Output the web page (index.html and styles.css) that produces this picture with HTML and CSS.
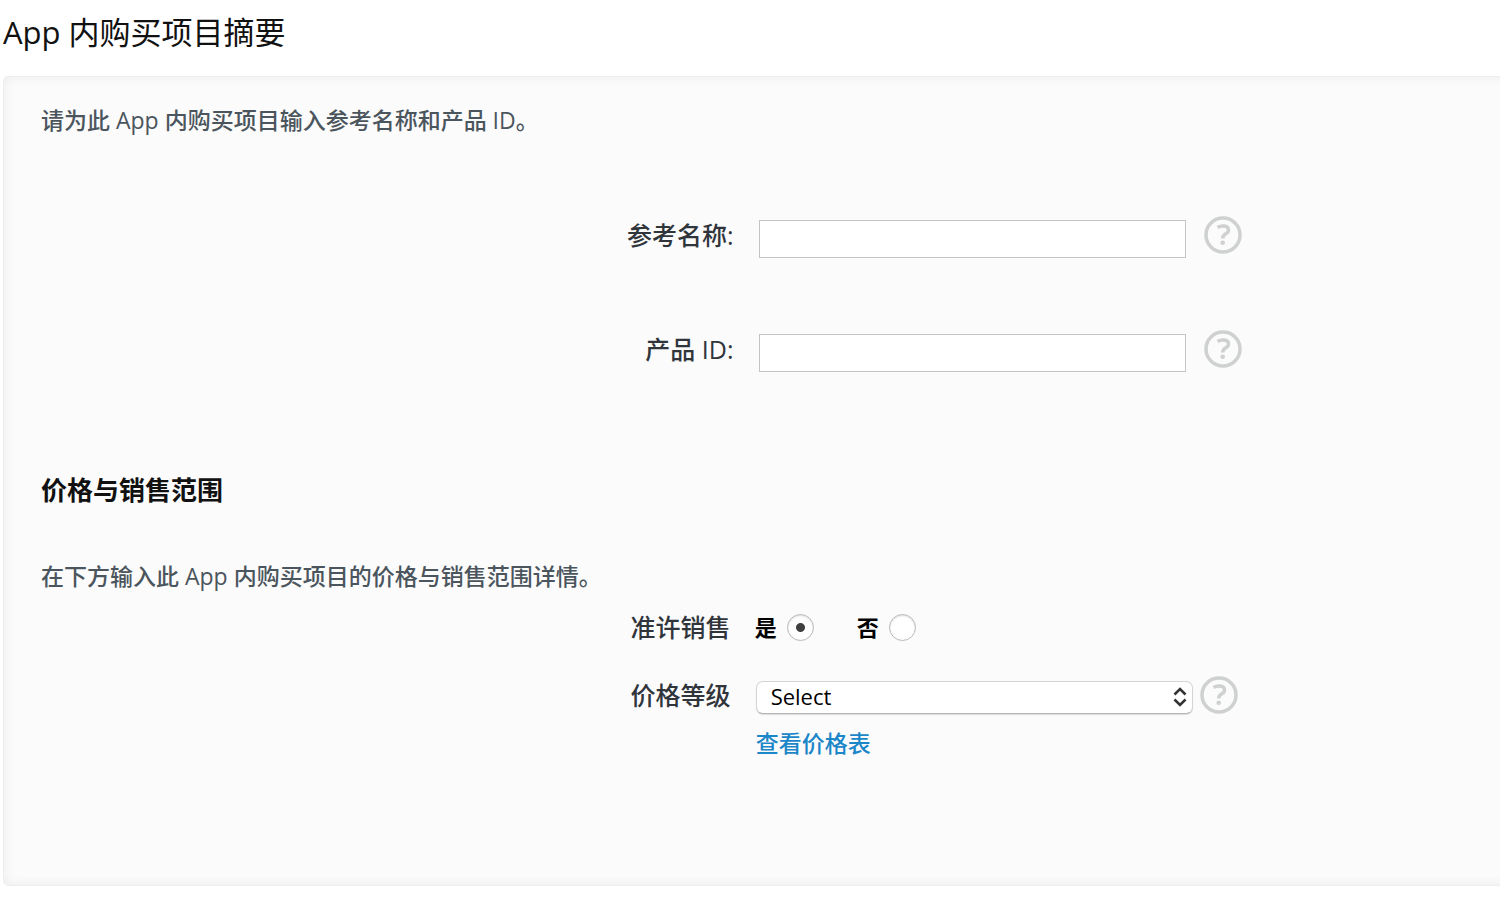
FILE: index.html
```html
<!DOCTYPE html>
<html lang="zh-CN">

<head>
    <meta charset="UTF-8">
    <meta name="viewport" content="width=device-width, initial-scale=1.0">
    <title>App 内购买项目摘要</title>
    <link rel="stylesheet" href="styles.css">
</head>

<body>
    <h1>App 内购买项目摘要</h1>

    <form class="panel">
        <p class="intro">请为此 App 内购买项目输入参考名称和产品 ID。</p>

        <div class="row text-row">
            <label class="name" for="refName">参考名称:</label>
            <input type="text" id="refName" name="refName">
            <button type="button" class="help" aria-label="参考名称">
                <svg viewBox="0 0 38 38"><circle cx="19" cy="19" r="17"/><path d="M13.5 11.5Q16 10 19 10Q24.500 10 24.500 14Q24.500 16.200 21.800 17.800Q18.700 19.600 18.700 22.500"/><circle class="dot" cx="18.700" cy="26.800" r="2.300"/></svg>
            </button>
        </div>

        <div class="row text-row">
            <label class="name" for="productId">产品 ID:</label>
            <input type="text" id="productId" name="productId">
            <button type="button" class="help" aria-label="产品 ID">
                <svg viewBox="0 0 38 38"><circle cx="19" cy="19" r="17"/><path d="M13.5 11.5Q16 10 19 10Q24.500 10 24.500 14Q24.500 16.200 21.800 17.800Q18.700 19.600 18.700 22.500"/><circle class="dot" cx="18.700" cy="26.800" r="2.300"/></svg>
            </button>
        </div>

        <h2>价格与销售范围</h2>
        <p class="intro">在下方输入此 App 内购买项目的价格与销售范围详情。</p>

        <div class="row price-row" role="radiogroup" aria-labelledby="saleLabel">
            <span class="name" id="saleLabel">准许销售</span>
            <div class="options">
                <label for="saleYes">是 <input type="radio" id="saleYes" name="sale" checked></label>
                <label for="saleNo">否 <input type="radio" id="saleNo" name="sale"></label>
            </div>
        </div>

        <div class="row price-row">
            <label class="name" for="priceTier">价格等级</label>
            <div class="tier">
                <div class="select">
                    <select id="priceTier" name="priceTier">
                        <option>Select</option>
                    </select>
                    <svg viewBox="0 0 14 20"><path d="M1.500 7.500L7 2L12.500 7.500M1.500 12.500L7 18L12.500 12.500"/></svg>
                </div>
                <a href="#">查看价格表</a>
            </div>
            <button type="button" class="help" aria-label="价格等级">
                <svg viewBox="0 0 38 38"><circle cx="19" cy="19" r="17"/><path d="M13.5 11.5Q16 10 19 10Q24.500 10 24.500 14Q24.500 16.200 21.800 17.800Q18.700 19.600 18.700 22.500"/><circle class="dot" cx="18.700" cy="26.800" r="2.300"/></svg>
            </button>
        </div>
    </form>
</body>

</html>
```
FILE: styles.css
```css
* {
    box-sizing: border-box;
}

body {
    margin: 0;
    background-color: #fff;
    color: #111;
    font-family: "Open Sans", "Noto Sans CJK SC", sans-serif;
    font-size: 23px;
    font-weight: 500;
    overflow-x: hidden;
}

h1 {
    margin: 0;
    padding: 12px 3px 24px;
    font-size: 31px;
    font-weight: 400;
    line-height: 40px;
}

h2 {
    margin: 98px 0 50px;
    font-size: 26px;
    font-weight: 700;
    line-height: 40px;
}

/* the panel runs off the right side of the window */
.panel {
    margin: 0 -20px 0 3px;
    padding: 27px 20px 126px 37px;
    border: 1px solid #eee;
    border-radius: 5px;
    background-color: #fbfbfb;
    box-shadow: inset 0 0 12px #ececec;
}

.intro {
    margin: 0;
    color: #4b555d;
    line-height: 32px;
}

.row {
    display: flex;
    align-items: flex-start;
}

.name {
    color: #30353b;
    font-size: 25px;
    line-height: 38px;
    text-align: right;
}

.text-row {
    margin-top: 72px;
}

.intro + .text-row {
    margin-top: 80px;
}

.text-row .name {
    flex: 0 0 47.5%;
}

.text-row input {
    width: 29.3%;
    height: 38px;
    margin: 4px 18px 0 25px;
    padding: 0 8px;
    border: 1px solid #c4c4c4;
    background-color: #fff;
    font: inherit;
}

.price-row {
    margin-top: 30px;
}

.intro + .price-row {
    margin-top: 16px;
}

.price-row .name {
    flex: 0 0 47.3%;
}

.options {
    display: flex;
    gap: 43px;
    margin-left: 24px;
}

.options label {
    display: flex;
    align-items: center;
    gap: 10px;
    color: #000;
    font-size: 22px;
    font-weight: 700;
    line-height: 38px;
}

.options input {
    appearance: none;
    width: 27px;
    height: 27px;
    margin: 0;
    border: 1px solid #b9b9b9;
    border-radius: 50%;
    background-color: #fff;
    box-shadow: inset 0 1px 2px #ddd;
}

.options input:checked {
    background-image: radial-gradient(circle, #404040 4px, transparent 5px);
}

.tier {
    width: 30%;
    margin: 5px 7px 0 25px;
}

.select {
    position: relative;
}

.select select {
    appearance: none;
    display: block;
    width: 100%;
    height: 33px;
    padding: 0 40px 3px 14px;
    border: 1px solid #d5d5d5;
    border-bottom-color: #b5b5b5;
    border-radius: 7px;
    background-color: #fff;
    box-shadow: 0 1px 1px #ddd;
    color: #000;
    font: inherit;
    font-size: 22px;
    line-height: 28px;
}

.select svg {
    position: absolute;
    top: 6px;
    right: 6px;
    width: 14px;
    height: 20px;
    fill: none;
    stroke: #333;
    stroke-width: 2.5;
    pointer-events: none;
}

.tier a {
    display: block;
    margin-top: 13px;
    color: #1b86c8;
    line-height: 32px;
    text-decoration: none;
}

.help {
    width: 38px;
    height: 38px;
    padding: 0;
    border: 0;
    background: none;
}

.help svg {
    display: block;
    fill: none;
    stroke: #cfd1d1;
    stroke-width: 3.5;
}

.help .dot {
    fill: #cfd1d1;
    stroke: none;
}
```
